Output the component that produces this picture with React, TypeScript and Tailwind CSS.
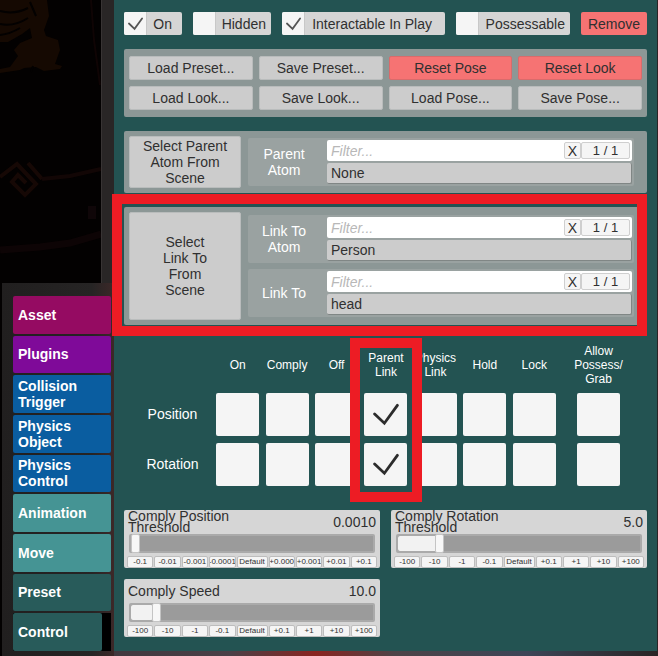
import { Fragment, useState } from 'react';

const tabs = [
  { name: 'Asset', color: 'bg-[#950b62]' },
  { name: 'Plugins', color: 'bg-[#7f0a99]' },
  { name: 'Collision Trigger', color: 'bg-[#0a5da0]' },
  { name: 'Physics Object', color: 'bg-[#0a5da0]' },
  { name: 'Physics Control', color: 'bg-[#0a5da0]' },
  { name: 'Animation', color: 'bg-[#459494]' },
  { name: 'Move', color: 'bg-[#459494]' },
  { name: 'Preset', color: 'bg-[#285b5a]' },
];

const presets = [
  { name: 'Load Preset...' },
  { name: 'Save Preset...' },
  { name: 'Reset Pose', danger: true },
  { name: 'Reset Look', danger: true },
  { name: 'Load Look...' },
  { name: 'Save Look...' },
  { name: 'Load Pose...' },
  { name: 'Save Pose...' },
];

const modes = ['On', 'Comply', 'Off', 'Parent Link', 'Physics Link', 'Hold', 'Lock'];

function Check({ className }: { className: string }) {
  return (
    <svg viewBox="0 0 24 24" className={className} fill="none" stroke="currentColor" strokeLinecap="round" aria-hidden="true">
      <path d="M1.5 12 L10.5 20.5 L22.5 4" />
    </svg>
  );
}

function Toggle({ label, on, width }: { label: string; on?: boolean; width: string }) {
  return (
    <label className={`flex h-[23px] items-stretch overflow-hidden rounded-xs bg-[#d5d5d5] ${width}`}>
      <input type="checkbox" defaultChecked={on} className="peer sr-only" />
      <span className="flex w-[23px] shrink-0 items-center justify-center border-r border-[#c8c8c8] bg-[#f5f5f5] text-[#555555]">
        {on && <Check className="size-[15px] stroke-[2.8]" />}
      </span>
      <span className="grow self-center whitespace-nowrap pr-[5px] text-right">{label}</span>
    </label>
  );
}

function Chooser({ label, value, id }: { label: string; value: string; id: string }) {
  return (
    <div className="flex gap-[7px] rounded-xs bg-[#9aa2a1] p-[2px] pl-0">
      <label htmlFor={id} className="w-[72px] shrink-0 self-center px-2 text-center text-white">
        {label}
      </label>
      <div className="flex min-w-0 grow flex-col gap-[2px]">
        <div className="flex h-[21px] items-center rounded-xs bg-white pr-[2px]">
          <input
            type="text"
            aria-label={`${label} filter`}
            placeholder="Filter..."
            className="min-w-0 grow bg-transparent pl-[4px] italic outline-none placeholder:text-[#b8b8b8]"
          />
          <button className="h-[17px] w-[17px] rounded-xs border border-[#cfcfcf] bg-[#f5f5f5] leading-none">X</button>
          <button className="h-[17px] w-[49px] rounded-xs border border-[#cfcfcf] bg-[#f5f5f5] text-[13px] leading-none">
            1 / 1
          </button>
        </div>
        <select
          id={id}
          className="h-[21px] w-full appearance-none rounded-xs border-r border-b border-[#808685] bg-[#cccccc] pl-1 leading-5"
        >
          <option>{value}</option>
        </select>
      </div>
    </div>
  );
}

function Cell({ label, name, type, on }: { label: string; name: string; type: string; on?: boolean }) {
  return (
    <label className="flex size-[43px] items-center justify-center self-center justify-self-center rounded-xs bg-[#f5f5f5] text-[#2c2c2c]">
      <input type={type} name={name} aria-label={label} defaultChecked={on} className="sr-only" />
      {on && <Check className="size-[26px] stroke-[2.6]" />}
    </label>
  );
}

function Slider({ title, value, start, steps }: { title: string[]; value: string; start: number; steps: string[] }) {
  const [pos, setPos] = useState(start);
  const id = title.join('-').toLowerCase();
  return (
    <div className="flex h-[58px] min-w-0 flex-col rounded-xs bg-[#d6d6d6] px-[3px]">
      <div className="flex h-6 shrink-0 items-center justify-between pr-px pl-px">
        <label htmlFor={id} className="leading-[11px]">
          {title.map((line) => (
            <span key={line} className="block">
              {line}
            </span>
          ))}
        </label>
        <output htmlFor={id}>{value}</output>
      </div>
      <div className="relative mx-[2px] h-[19px] shrink-0 rounded-xs border-2 border-[#aaaaaa] bg-[#9b9b9b]">
        <div className="absolute inset-y-0 left-0 rounded-xs bg-[#f2f2f2]" style={{ width: `${pos}%` }} />
        <input
          id={id}
          type="range"
          value={pos}
          onChange={(e) => setPos(Number(e.target.value))}
          className="absolute inset-0 h-full w-full appearance-none bg-transparent [&::-webkit-slider-thumb]:h-[19px] [&::-webkit-slider-thumb]:w-[9px] [&::-webkit-slider-thumb]:appearance-none [&::-webkit-slider-thumb]:rounded-xs [&::-webkit-slider-thumb]:border [&::-webkit-slider-thumb]:border-[#c4c4c4] [&::-webkit-slider-thumb]:bg-[#f7f7f7]"
        />
      </div>
      <div className="mt-[3px] flex grow gap-px">
        {steps.map((step) => (
          <button
            key={step}
            className={`overflow-hidden rounded-xs border border-[#bdbdbd] bg-[#f5f5f5] text-[8px] leading-none whitespace-nowrap ${
              step === 'Default' ? 'w-[31px] shrink-0' : 'min-w-0 flex-1'
            }`}
          >
            <span className="flex justify-center">{step}</span>
          </button>
        ))}
      </div>
    </div>
  );
}

const wideSteps = ['-100', '-10', '-1', '-0.1', 'Default', '+0.1', '+1', '+10', '+100'];
const fineSteps = ['-0.1', '-0.01', '-0.001', '-0.0001', 'Default', '+0.000', '+0.001', '+0.01', '+0.1'];

const button = 'rounded-xs border border-[#b9bcbc] bg-[#cccccc]';

export default function App() {
  return (
    <div className="flex min-h-screen bg-[linear-gradient(90deg,#393036,#4a4047_35%,#8a2420_48%,#4d4347_60%,#3d4557_80%,#2a2425)] font-['Liberation_Sans',Arial,sans-serif] text-[14px] leading-4 text-[#303030]">
      <aside className="flex w-[114px] shrink-0 flex-col bg-[#030101]">
        <div className="flex h-[283px] shrink-0">
          <svg viewBox="0 0 101 283" className="w-[101px]" fill="none" aria-hidden="true">
            <path
              d="M0 0H47L49 16L44 30L46 36L58 40L60 50L55 64L62 66L60 69L44 71L36 67L24 68L20 70L0 73V69L10 67L18 56L14 50L20 43L32 38L30 28L22 34L8 42L0 42Z"
              fill="#150902"
            />
            <path d="M0 11Q14 15 28 8M0 24Q14 27 28 18M0 35Q10 34 20 28M30 2L36 16M33 66L31 72" stroke="#030101" strokeWidth="2" />
            <path d="M0 177L17 164L36 184L25 195L12 182L18 175L26 183M28 163L42 179" stroke="#160805" strokeWidth="4" />
            <path d="M42 179L70 176L101 169" stroke="#120605" strokeWidth="4" />
            <path d="M0 250L40 247L70 243L101 234" stroke="#0d0405" strokeWidth="7" />
            <path d="M88 206H96V219H88Z" fill="#0f0608" />
            <path d="M91 0L94 40L100 85" stroke="#0f0404" strokeWidth="2" />
          </svg>
          <div className="grow border-l border-[#383434] bg-[#292626]" />
        </div>
        <nav className="ml-[2px] grid grow auto-rows-fr gap-[2px] bg-[linear-gradient(90deg,#211f1f,#262424_80%,#3c2828)] pt-[13px] pr-[3px] pb-[5px] pl-[11px] text-[14px] font-bold text-white">
          {tabs.map((tab) => (
            <button key={tab.name} className={`rounded-xs px-[5px] text-left ${tab.color}`}>
              {tab.name}
            </button>
          ))}
          <div className="flex bg-black">
            <button className="w-[89px] rounded-xs bg-[#285b5a] px-[5px] text-left">Control</button>
          </div>
        </nav>
      </aside>

      <main className="mr-px mb-[5px] flex min-w-0 grow flex-col gap-[14px] bg-[#235352] pt-3 pr-[10px] pb-[14px] pl-[10px]">
        <div className="flex justify-between">
          <Toggle label="On" on width="w-[58px] pr-[5px]" />
          <Toggle label="Hidden" width="w-[78px]" />
          <Toggle label="Interactable In Play" on width="w-[163px] pr-[8px]" />
          <Toggle label="Possessable" width="w-[114px]" />
          <button className="h-[23px] w-[66px] rounded-xs bg-[#f67373]">Remove</button>
        </div>

        <section className="grid grid-cols-4 gap-[6px] rounded-xs bg-[#8c9796] px-[5px] py-[7px]">
          {presets.map((preset) => (
            <button
              key={preset.name}
              className={
                preset.danger
                  ? 'h-6 rounded-xs border border-[#d96b6b] bg-[#f67373]'
                  : 'h-6 rounded-xs border border-[#b9bcbc] bg-[#cccccc]'
              }
            >
              {preset.name}
            </button>
          ))}
        </section>

        <section className="flex gap-[7px] rounded-xs bg-[#8c9796] py-[5px] pr-[13px] pl-[5px]">
          <button className={`w-[112px] shrink-0 px-2 ${button}`}>Select Parent Atom From Scene</button>
          <div className="min-w-0 grow py-[2px]">
            <Chooser id="parent-atom" label="Parent Atom" value="None" />
          </div>
        </section>

        <section className="relative flex gap-[7px] rounded-xs bg-[#8c9796] py-[5px] pr-[13px] pl-[5px]">
          <button className={`w-[112px] shrink-0 px-7 ${button}`}>Select Link To From Scene</button>
          <div className="flex min-w-0 grow flex-col gap-[6px] py-[3px]">
            <Chooser id="link-atom" label="Link To Atom" value="Person" />
            <Chooser id="link-to" label="Link To" value="head" />
          </div>
          <div className="pointer-events-none absolute -top-[13px] right-0 -bottom-[11px] -left-[12px] border-[10px] border-[#ed1c24]" />
        </section>

        <section className="relative grid grid-cols-[89px_repeat(7,1fr)_79px] grid-rows-[50px_50px_50px] pr-[9px] text-center text-white">
          <span />
          {modes.map((mode) => (
            <span key={mode} className="self-center pt-px text-[12px] leading-[14px]">
              {mode}
            </span>
          ))}
          <span className="self-center pt-px text-[12px] leading-[14px]">
            Allow
            <br />
            Possess/
            <br />
            Grab
          </span>
          {['Position', 'Rotation'].map((row) => (
            <Fragment key={row}>
              <span className="self-center pl-2">{row}</span>
              {modes.map((mode) => (
                <Cell key={mode} type="radio" name={row} label={`${row} ${mode}`} on={mode === 'Parent Link'} />
              ))}
              <Cell type="checkbox" name={`${row}-grab`} label={`${row} allow possess or grab`} />
            </Fragment>
          ))}
          <div className="pointer-events-none absolute -inset-x-[11px] -top-px -bottom-[13px] col-start-5 col-end-6 row-start-1 row-end-4 border-[10px] border-[#ed1c24]" />
        </section>

        <section className="mt-[7px] grid grid-cols-2 gap-[11px]">
          <Slider title={['Comply Position', 'Threshold']} value="0.0010" start={0} steps={fineSteps} />
          <Slider title={['Comply Rotation', 'Threshold']} value="5.0" start={16} steps={wideSteps} />
          <Slider title={['Comply Speed']} value="10.0" start={9} steps={wideSteps} />
        </section>
      </main>
    </div>
  );
}
